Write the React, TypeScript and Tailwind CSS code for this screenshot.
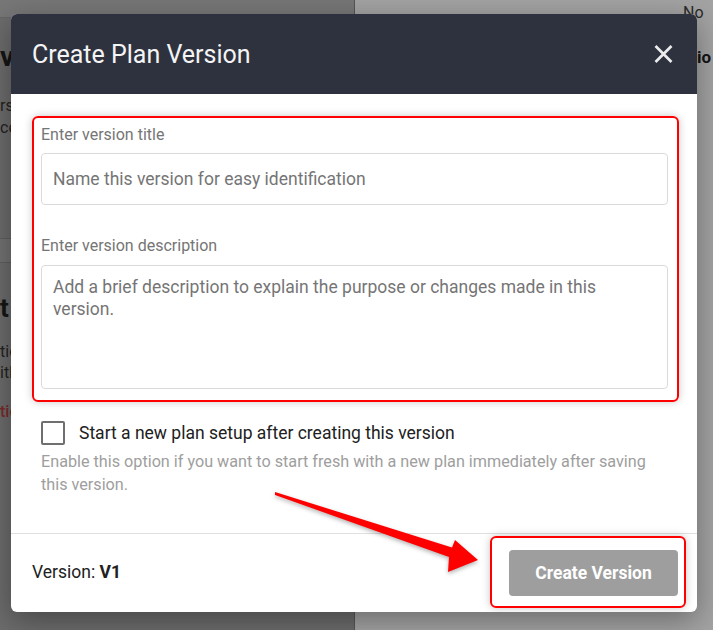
import React from 'react';

/** Fondo atenuado detrás del modal (fragmentos de la página). */
function Fondo() {
  return (
    <div className="flex h-[630px] w-full overflow-hidden">
      <div className="flex w-[355px] shrink-0 flex-col overflow-hidden whitespace-nowrap border-r border-[#565656] bg-[#6c6c6c]">
        <div className="h-[18px] border-b border-[#666] bg-[#777]" />
        <h2 className="mt-[22px] text-[28px] font-bold leading-[34px] text-[#151515]">versions</h2>
        <p className="mt-[21px] text-[16px] leading-[22px] text-[#222]">rsions are saved</p>
        <p className="text-[16px] leading-[22px] text-[#222]">ce them at any time</p>
        <div className="mt-[99px] h-[25px] border-y border-[#5e5e5e] bg-[#727272]" />
        <h3 className="mt-[29px] text-[26px] font-bold leading-[32px] text-[#151515]">t&nbsp;&nbsp;plan</h3>
        <p className="mt-[17px] text-[16px] leading-[21px] text-[#222]">tion</p>
        <p className="text-[16px] leading-[21px] text-[#222]">ith</p>
        <p className="mt-[18px] text-[16px] font-medium leading-[21px] text-[#7a2a2a]">tion</p>
      </div>
      <div className="flex flex-1 flex-col overflow-hidden whitespace-nowrap bg-[#a3a3a3] pl-[328px]">
        <span className="mt-[3px] text-[16px] leading-[20px] text-[#2a2a2a]">No</span>
        <span className="ml-[14px] mt-[22px] text-[17px] font-bold leading-[24px] text-[#151515]">io</span>
      </div>
    </div>
  );
}

function Flecha() {
  return (
    <svg
      className="pointer-events-none absolute left-0 top-0 drop-shadow-[0_2px_2px_rgba(0,0,0,0.3)]"
      width="713"
      height="630"
      viewBox="0 0 713 630"
    >
      <polygon
        points="275,492 452,547.5 455,540 478,560 448,572 449,557 275,495"
        fill="#ff0000"
      />
    </svg>
  );
}

export default function App() {
  return (
    <div className="relative h-[630px] w-[713px] overflow-hidden font-['Roboto',sans-serif]">
      <Fondo />

      <div className="absolute left-[11px] top-[14px] w-[686px] overflow-hidden rounded-[6px] bg-white shadow-[0_8px_30px_rgba(0,0,0,0.35)]">
        <header className="flex h-[80px] items-center justify-between bg-[#2e323f] pl-[21px] pr-[24px]">
          <h1 className="text-[25px] font-normal leading-none text-[#f4f4f4]">Create Plan Version</h1>
          <button aria-label="Close" className="text-[#ececec]">
            <svg width="19" height="18" viewBox="0 0 19 18" fill="none">
              <path d="M1.5 1 L17.5 17 M17.5 1 L1.5 17" stroke="currentColor" strokeWidth="2.7" />
            </svg>
          </button>
        </header>

        <div className="pb-[37px] pl-[21px] pr-[18px] pt-[22px]">
          <div className="rounded-[6px] border-2 border-[#ff0000] pb-[11px] pl-[7px] pr-[9px] pt-[5px] shadow-[0_0_8px_rgba(0,0,0,0.22)]">
            <label className="block text-[16px] leading-[24px] text-[#757575]">Enter version title</label>
            <input
              type="text"
              placeholder="Name this version for easy identification"
              className="mt-[6px] block h-[52px] w-full rounded-[4px] border border-[#dadada] px-[11px] text-[17.5px] text-[#212121] outline-none placeholder:text-[#757575]"
            />
            <label className="mt-[29px] block text-[16px] leading-[24px] text-[#757575]">
              Enter version description
            </label>
            <textarea
              placeholder="Add a brief description to explain the purpose or changes made in this version."
              className="mt-[7px] block h-[124px] w-full resize-none rounded-[4px] border border-[#dadada] px-[11px] pt-[10px] text-[17.5px] leading-[22px] text-[#212121] outline-none placeholder:text-[#757575]"
            />
          </div>

          <label className="ml-[9px] mt-[19px] flex items-center gap-[14px]">
            <span className="block h-[24px] w-[24px] rounded-[2px] border-2 border-[#6f6f6f]" />
            <span className="text-[17.5px] leading-[24px] text-[#212121]">
              Start a new plan setup after creating this version
            </span>
          </label>
          <p className="ml-[9px] mt-[5px] max-w-[622px] text-[16.2px] leading-[23px] text-[#9e9e9e]">
            Enable this option if you want to start fresh with a new plan immediately after saving this version.
          </p>
        </div>

        <footer className="flex items-center justify-between border-t border-[#e0e0e0] pb-[4px] pl-[21px] pr-[11px] pt-[2px]">
          <span className="text-[17.5px] text-[#212121]">
            Version: <b className="font-bold">V1</b>
          </span>
          <div className="rounded-[6px] border-2 border-[#ff0000] pb-[10px] pl-[17px] pr-[6px] pt-[12px] shadow-[0_0_8px_rgba(0,0,0,0.22)]">
            <button className="h-[46px] w-[169px] rounded-[4px] bg-[#9e9e9e] pt-[1px] text-[17.5px] font-bold text-white">
              Create Version
            </button>
          </div>
        </footer>
      </div>

      <Flecha />
    </div>
  );
}
